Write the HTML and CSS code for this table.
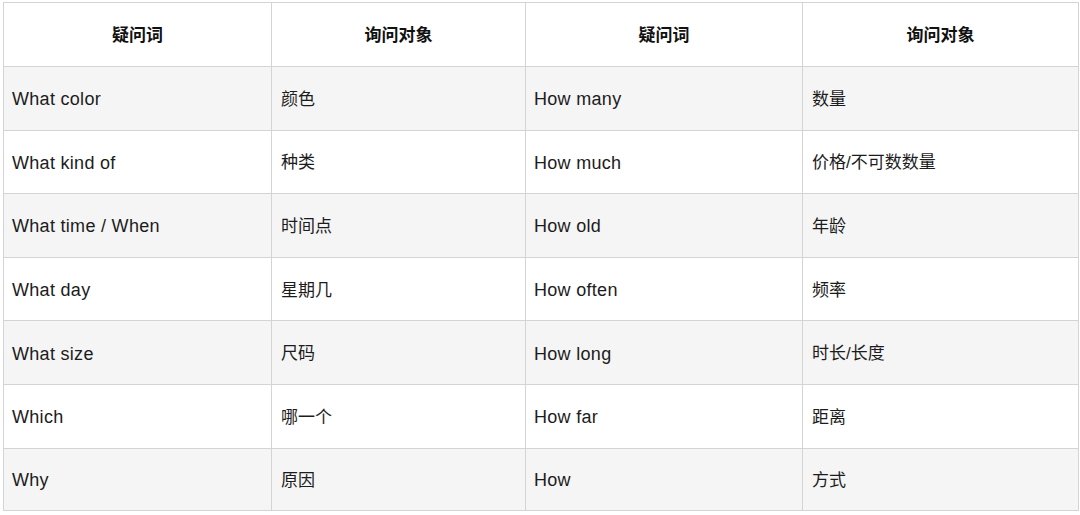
FILE: index.html
```html
<!DOCTYPE html>
<html lang="zh-CN">
<head>
<meta charset="utf-8">
<title>疑问词</title>
<link rel="stylesheet" href="styles.css">
</head>
<body>
<table class="qt">
  <colgroup>
    <col class="c1"><col class="c2"><col class="c3"><col class="c4">
  </colgroup>
  <thead>
    <tr><th>疑问词</th><th>询问对象</th><th class="mid">疑问词</th><th>询问对象</th></tr>
  </thead>
  <tbody>
    <tr><td class="en">What color</td><td>颜色</td><td class="mid en">How many</td><td>数量</td></tr>
    <tr><td class="en">What kind of</td><td>种类</td><td class="mid en">How much</td><td>价格/不可数数量</td></tr>
    <tr><td class="en">What time / When</td><td>时间点</td><td class="mid en">How old</td><td>年龄</td></tr>
    <tr><td class="en">What day</td><td>星期几</td><td class="mid en">How often</td><td>频率</td></tr>
    <tr><td class="en">What size</td><td>尺码</td><td class="mid en">How long</td><td>时长/长度</td></tr>
    <tr><td class="en">Which</td><td>哪一个</td><td class="mid en">How far</td><td>距离</td></tr>
    <tr class="last"><td class="en">Why</td><td>原因</td><td class="mid en">How</td><td>方式</td></tr>
  </tbody>
</table>
</body>
</html>
```
FILE: styles.css
```css
html, body {
  margin: 0;
  padding: 0;
  background: #ffffff;
}
body {
  padding: 2px 0 0 3px;
  font-family: "Liberation Sans", "Noto Sans CJK SC", Arial, sans-serif;
  font-size: 17px;
  color: #1c1c1c;
}
.qt {
  border-collapse: collapse;
  width: 1075px;
  table-layout: fixed;
  border-top: 1px solid #bdbdbd;
}
.c1 { width: 268px; }
.c2 { width: 254px; }
.c3 { width: 277px; }
.c4 { width: 276px; }
.qt th, .qt td {
  border: 1px solid #d4d4d4;
  padding: 3px 9px 0 9px;
  height: 63.6px;
  box-sizing: border-box;
  text-align: left;
  vertical-align: middle;
  line-height: 24px;
}
.qt td.en {
  font-size: 18px;
  letter-spacing: 0.3px;
  padding-left: 8px;
  padding-top: 2px;
}
.qt th {
  font-weight: bold;
  text-align: center;
  height: 64px;
  padding-top: 2px;
  color: #111;
}
.qt th.mid, .qt td.mid {
  border-left: 1px solid #b8b8b8;
}
.qt tbody tr:nth-child(odd) {
  background: #f5f5f5;
}
.qt tr.last td {
  border-top: 1px solid #c4c4c4;
  height: 62px;
}
```
